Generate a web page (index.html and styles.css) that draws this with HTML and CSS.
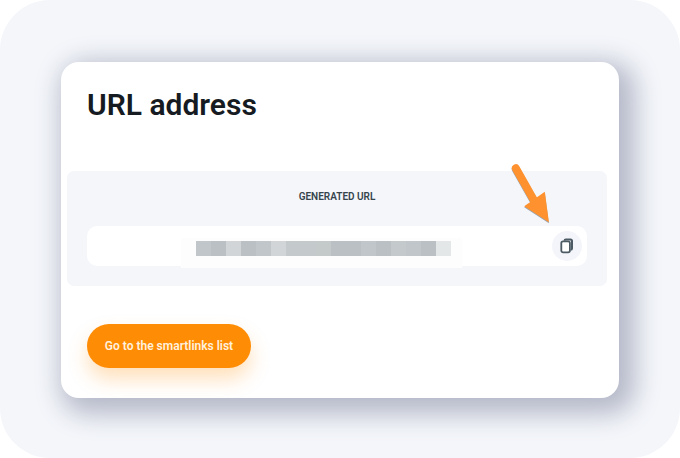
FILE: index.html
```
<!DOCTYPE html>
<html lang="en">
<head>
<meta charset="utf-8">
<title>URL address</title>
<link rel="stylesheet" href="styles.css">
</head>
<body>
<main class="stage">
  <section class="card">
    <h1 class="title">URL address</h1>
    <div class="panel">
      <h2 class="label">GENERATED URL</h2>
      <div class="field">
        <div class="redaction">
          <div class="mosaic">
            <i class="m2"></i><i class="m1"></i><i class="m4"></i><i class="m1"></i><i class="m2"></i><i class="m4"></i><i class="m3"></i><i class="m3"></i><i class="m3g"></i><i class="m1"></i><i class="m1"></i><i class="m2"></i><i class="m1"></i><i class="m3"></i><i class="m2"></i><i class="m1"></i><i class="m5"></i>
          </div>
        </div>
        <button class="copy" aria-label="Copy">
          <svg width="14" height="16" viewBox="0 0 14 16" fill="none" stroke="#4c5a63">
            <path d="M4.6 2.8V2.4Q4.6 1.4 5.8 1.4H10.4Q12 1.4 12 2.9V10.4Q12 11.8 10.6 11.8" stroke-width="2"/>
            <rect x="1.3" y="3.3" width="8.6" height="11.1" rx="1.8" stroke-width="1.8" fill="#fff"/>
          </svg>
        </button>
        <svg class="arrow" width="46" height="66" viewBox="0 0 46 66">
          <path d="M10.8 8.3 28.2 39" stroke="#ff922e" stroke-width="8" stroke-linecap="round"/>
          <path d="M19.2 46.3 39.8 31.8 43.9 62.2Z" fill="#ff922e"/>
        </svg>
      </div>
    </div>
    <button class="go">Go to the smartlinks list</button>
  </section>
</main>
</body>
</html>
```
FILE: styles.css
```
* { box-sizing: border-box; }
body {
  margin: 0;
  background: #fff;
  font-family: Roboto, "Liberation Sans", sans-serif;
}
button { border: 0; padding: 0; font: inherit; }
.stage {
  width: 680px;
  height: 458px;
  padding: 62px 61px 60px 60.5px;
  border-radius: 50px;
  background: #f4f6fa;
}
.card {
  height: 336px;
  padding: 25px 12px 0 6.5px;
  border-radius: 18px;
  background: #fff;
  box-shadow: 8px 8px 26px 8px #b5b9c8;
}
.title {
  margin: 0 0 48px 20px;
  font-size: 30px;
  font-weight: 600;
  line-height: 36px;
  color: #161b22;
}
.panel {
  height: 115px;
  padding: 19px 20px 0;
  border-radius: 7px;
  background: #f4f6fa;
}
.label {
  margin: 0 0 22px;
  font-size: 10px;
  font-weight: 600;
  line-height: 14px;
  text-align: center;
  color: #36444c;
}
.field {
  position: relative;
  display: flex;
  justify-content: space-between;
  align-items: center;
  height: 40px;
  padding: 0 5px 0 94px;
  border-radius: 10px;
  background: #fff;
}
.redaction {
  align-self: flex-start;
  width: 281px;
  height: 30px;
  margin-top: 12px;
  padding: 3px 0 0 15px;
  background: #fdfdfd;
}
.mosaic {
  display: grid;
  grid-template-columns: repeat(17, 15px);
  height: 14.5px;
}
.m1 { background: #bac0c3; }
.m2 { background: #c0c6c9; }
.m3 { background: #c4cacc; }
.m3g { background: #c4cac9; }
.m4 { background: #d1d5d8; }
.m5 { background: #e3e7e8; }
.copy {
  display: flex;
  justify-content: center;
  align-items: center;
  width: 30px;
  height: 30px;
  border-radius: 50%;
  background: #f4f5fa;
}
.arrow {
  position: absolute;
  top: -66px;
  right: 36px;
  filter: drop-shadow(0.5px 1px 0.7px #5f6b7999);
}
.go {
  display: block;
  width: 164px;
  height: 44px;
  margin: 38px 0 0 20px;
  border-radius: 22px;
  background: #ff8c05;
  box-shadow: 0 11px 20px #ff8c0545;
  font-size: 12px;
  font-weight: 600;
  color: #fff1df;
}
```
